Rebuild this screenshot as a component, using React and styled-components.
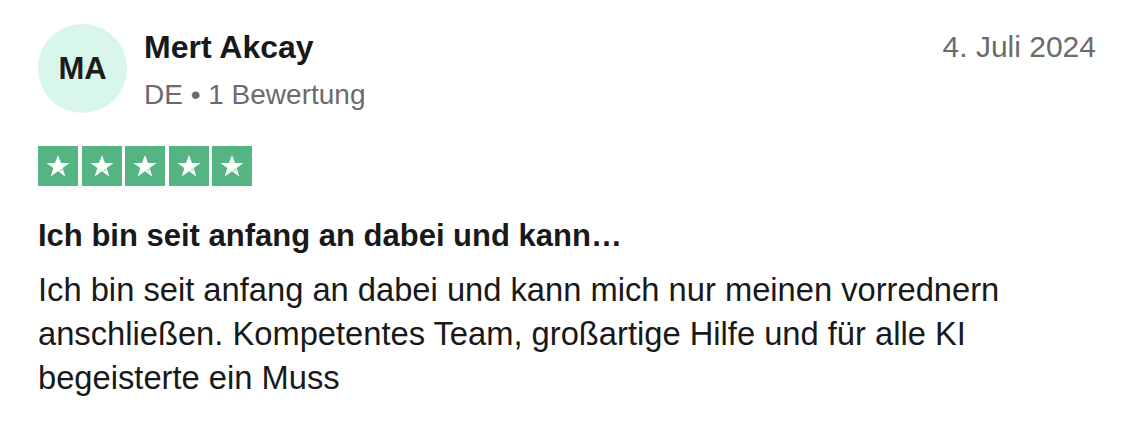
import styled, { createGlobalStyle } from 'styled-components';

const GlobalStyle = createGlobalStyle`
  html, body {
    margin: 0;
    padding: 0;
    background: #ffffff;
  }
  body {
    font-family: "Liberation Sans", Arial, Helvetica, sans-serif;
    color: #191919;
  }
`;

const Card = styled.article`
  width: 1124px;
  height: 432px;
  box-sizing: border-box;
  padding: 24px 28px 0 38px;
  background: #fff;
`;

const Header = styled.header`
  display: flex;
  align-items: flex-start;
`;

const Avatar = styled.div`
  flex: none;
  width: 89px;
  height: 89px;
  border-radius: 50%;
  background: #d9f6ea;
  display: flex;
  align-items: center;
  justify-content: center;
  font-size: 31px;
  font-weight: 700;
  color: #1c1c1c;
`;

const Info = styled.div`
  flex: 1;
  display: flex;
  flex-direction: column;
  margin-left: 17px;
  padding-top: 4px;
`;

const Name = styled.div`
  font-size: 32px;
  font-weight: 700;
  line-height: 38px;
  color: #191919;
`;

const Meta = styled.div`
  margin-top: 12px;
  font-size: 28px;
  line-height: 34px;
  color: #6b6b6b;
`;

const DateText = styled.time`
  flex: none;
  padding-top: 6px;
  font-size: 30px;
  line-height: 34px;
  color: #6b6b6b;
`;

const Stars = styled.div`
  display: flex;
  gap: 3.5px;
  margin-top: 33px;
`;

const StarBox = styled.div`
  width: 40px;
  height: 40px;
  background: ${(props) => (props.filled ? '#54b582' : '#dcdce6')};
  display: flex;
  align-items: center;
  justify-content: center;
`;

const Title = styled.h2`
  margin: 31px 0 0;
  font-size: 31px;
  font-weight: 700;
  line-height: 38px;
  color: #191919;
`;

const Body = styled.p`
  margin: 13px 0 0;
  font-size: 32.7px;
  line-height: 44px;
  color: #191919;
`;

function Star() {
  return (
    <svg width="28" height="28" viewBox="0 0 24 24">
      <path
        d="M12 2.5l2.6 6.9h7.3l-5.9 4.4 2.2 7.2L12 16.6 5.8 21l2.2-7.2L2.1 9.4h7.3z"
        fill="#fff"
      />
      <path d="M15.4 13.6l.8 2.8L12 16.6z" fill="#54b582" opacity="0.35" />
    </svg>
  );
}

export default function App() {
  return (
    <>
      <GlobalStyle />
      <Card>
        <Header>
          <Avatar>MA</Avatar>
          <Info>
            <Name>Mert Akcay</Name>
            <Meta>DE • 1 Bewertung</Meta>
          </Info>
          <DateText>4. Juli 2024</DateText>
        </Header>
        <Stars>
          {[0, 1, 2, 3, 4].map((i) => (
            <StarBox key={i} filled>
              <Star />
            </StarBox>
          ))}
        </Stars>
        <Title>Ich bin seit anfang an dabei und kann…</Title>
        <Body>
          Ich bin seit anfang an dabei und kann mich nur meinen vorrednern
          anschließen. Kompetentes Team, großartige Hilfe und für alle KI
          begeisterte ein Muss
        </Body>
      </Card>
    </>
  );
}
